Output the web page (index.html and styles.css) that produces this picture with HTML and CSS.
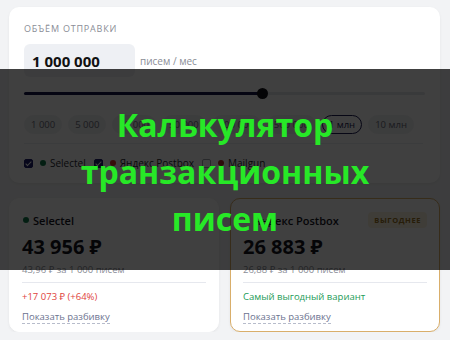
FILE: index.html
```html
<!DOCTYPE html>
<html lang="ru">
<head>
    <meta charset="UTF-8">
    <meta name="viewport" content="width=device-width, initial-scale=1.0">
    <title>Калькулятор транзакционных писем</title>
    <link rel="stylesheet" href="styles.css">
</head>
<body>
    <div class="calc-card">
        <div class="calc-label">Объём отправки</div>
        <div class="volume-row">
            <div class="volume-input">1 000 000</div>
            <span class="volume-unit">писем / мес</span>
        </div>
        <div class="slider">
            <div class="slider-fill"></div>
            <div class="slider-thumb"></div>
        </div>
        <div class="chips">
            <span class="chip">1 000</span>
            <span class="chip">5 000</span>
            <span class="chip">10 000</span>
            <span class="chip">50 000</span>
            <span class="chip">100 000</span>
            <span class="chip">500 000</span>
            <span class="chip active">1 млн</span>
            <span class="chip">10 млн</span>
        </div>
        <div class="providers">
            <label class="provider"><span class="check on"></span><span class="dot green"></span>Selectel</label>
            <label class="provider"><span class="check on"></span><span class="dot red"></span>Яндекс Postbox</label>
            <label class="provider"><span class="check"></span><span class="dot darkred"></span>Mailgun</label>
        </div>
    </div>

    <div class="results">
        <div class="result-card">
            <div class="result-head">
                <span class="result-name"><span class="dot green"></span>Selectel</span>
            </div>
            <div class="result-price">43 956 ₽</div>
            <div class="result-unit">43,96 ₽ за 1 000 писем</div>
            <div class="result-diff worse">+17 073 ₽ (+64%)</div>
            <a class="result-link" href="#">Показать разбивку</a>
        </div>
        <div class="result-card best">
            <div class="result-head">
                <span class="result-name"><span class="dot red"></span>Яндекс Postbox</span>
                <span class="badge">Выгоднее</span>
            </div>
            <div class="result-price">26 883 ₽</div>
            <div class="result-unit">26,88 ₽ за 1 000 писем</div>
            <div class="result-diff better">Самый выгодный вариант</div>
            <a class="result-link" href="#">Показать разбивку</a>
        </div>
    </div>

    <div class="title-overlay">
        <h1 class="title">
            <span>Калькулятор</span>
            <span>транзакционных</span>
            <span>писем</span>
        </h1>
    </div>
</body>
</html>
```

FILE: styles.css
```css
body {
    font-family: "Open Sans", "Noto Sans", sans-serif;
    background-color: #f2f3f5;
    margin: 0;
    padding: 7px 10px 0 9px;
    color: #15151f;
}

.calc-card {
    background: #fff;
    border-radius: 10px;
    box-shadow: 0 1px 3px rgba(0, 0, 0, 0.06);
    padding: 16px 15px 13px 15px;
}

.calc-label {
    font-size: 9px;
    line-height: 12px;
    letter-spacing: 0.8px;
    text-transform: uppercase;
    color: #8a8d96;
}

.volume-row {
    display: flex;
    align-items: center;
    margin-top: 9px;
}

.volume-input {
    width: 111px;
    height: 33px;
    box-sizing: border-box;
    padding: 0 8px;
    display: flex;
    align-items: center;
    background: #eef0f4;
    border-radius: 6px;
    font-size: 15px;
    font-weight: 700;
    color: #111;
}

.volume-unit {
    margin-left: 5px;
    font-size: 10px;
    color: #8a8d96;
}

.slider {
    position: relative;
    height: 3px;
    margin-top: 15px;
    background: #e4e6eb;
    border-radius: 2px;
}

.slider-fill {
    width: 239px;
    height: 3px;
    background: #17174a;
    border-radius: 2px;
}

.slider-thumb {
    position: absolute;
    left: 233px;
    top: -4px;
    width: 11px;
    height: 11px;
    border-radius: 50%;
    background: #111118;
}

.chips {
    display: flex;
    gap: 6px;
    margin-top: 20px;
    padding-bottom: 9px;
    border-bottom: 1px solid #eceef2;
    margin-right: 2px;
}

.chip {
    height: 19px;
    box-sizing: border-box;
    padding: 0 6px;
    display: flex;
    align-items: center;
    border: 1px solid #f0f1f4;
    border-radius: 10px;
    background: #f0f1f4;
    font-size: 9.5px;
    color: #6b6e78;
    white-space: nowrap;
}

.chip.active {
    background: #fff;
    border-color: #1d1d55;
    color: #1d1d55;
}

.providers {
    display: flex;
    gap: 8px;
    margin-top: 12px;
    font-size: 10px;
    color: #2a2a33;
}

.provider {
    display: flex;
    align-items: center;
}

.check {
    width: 9px;
    height: 9px;
    box-sizing: border-box;
    border: 1px solid #a0a3ab;
    border-radius: 2px;
    margin-right: 7px;
    position: relative;
}

.check.on {
    background: #1d1d6b;
    border-color: #1d1d6b;
}

.check.on::after {
    content: "";
    position: absolute;
    left: 2px;
    top: 0;
    width: 2px;
    height: 5px;
    border: solid #fff;
    border-width: 0 1.5px 1.5px 0;
    transform: rotate(45deg);
}

.dot {
    width: 6px;
    height: 6px;
    border-radius: 50%;
    margin-right: 4px;
    display: inline-block;
}

.dot.green {
    background: #0f7a4a;
}

.dot.red {
    background: #d93a2a;
}

.dot.darkred {
    background: #b4302a;
}

.results {
    display: grid;
    grid-template-columns: 1fr 1fr;
    gap: 11px;
    margin-top: 15px;
}

.result-card {
    background: #fff;
    border: 1px solid #fff;
    border-radius: 10px;
    box-shadow: 0 1px 3px rgba(0, 0, 0, 0.06);
    padding: 14px 12px 10px 12px;
    height: 134px;
    box-sizing: border-box;
}

.result-card.best {
    border-color: #d9ae6a;
}

.result-head {
    display: flex;
    justify-content: space-between;
    align-items: center;
    height: 14px;
}

.result-name {
    display: flex;
    align-items: center;
    font-size: 11px;
    font-weight: 600;
}

.result-name .dot {
    margin-left: 1px;
}

.badge {
    background: #fbf3df;
    color: #9a7424;
    font-size: 7.5px;
    font-weight: 700;
    letter-spacing: 0.6px;
    text-transform: uppercase;
    padding: 3px 6px;
    border-radius: 4px;
}

.result-price {
    margin-top: 6px;
    font-size: 20px;
    font-weight: 700;
    line-height: 28px;
}

.result-unit {
    margin-top: 2px;
    font-size: 9.5px;
    color: #8a8d96;
    padding-bottom: 6px;
    border-bottom: 1px solid #e6e8ee;
}

.result-diff {
    margin-top: 7px;
    font-size: 9.5px;
}

.result-diff.worse {
    color: #e0433c;
}

.result-diff.better {
    color: #1c9b57;
}

.result-link {
    display: inline-block;
    margin-top: 4px;
    font-size: 9.5px;
    color: #6c7390;
    text-decoration: none;
    border-bottom: 1px dashed #b7bccb;
    line-height: 12px;
}

.title-overlay {
    position: absolute;
    left: 0;
    right: 0;
    top: 69px;
    height: 201px;
    background: rgba(0, 0, 0, 0.75);
    display: flex;
    align-items: center;
    justify-content: center;
}

.title {
    margin: 0;
    font-size: 32px;
    font-weight: 700;
    line-height: 47px;
    color: #27e827;
    text-align: center;
    padding-top: 3px;
}

.title span {
    display: block;
}
```
